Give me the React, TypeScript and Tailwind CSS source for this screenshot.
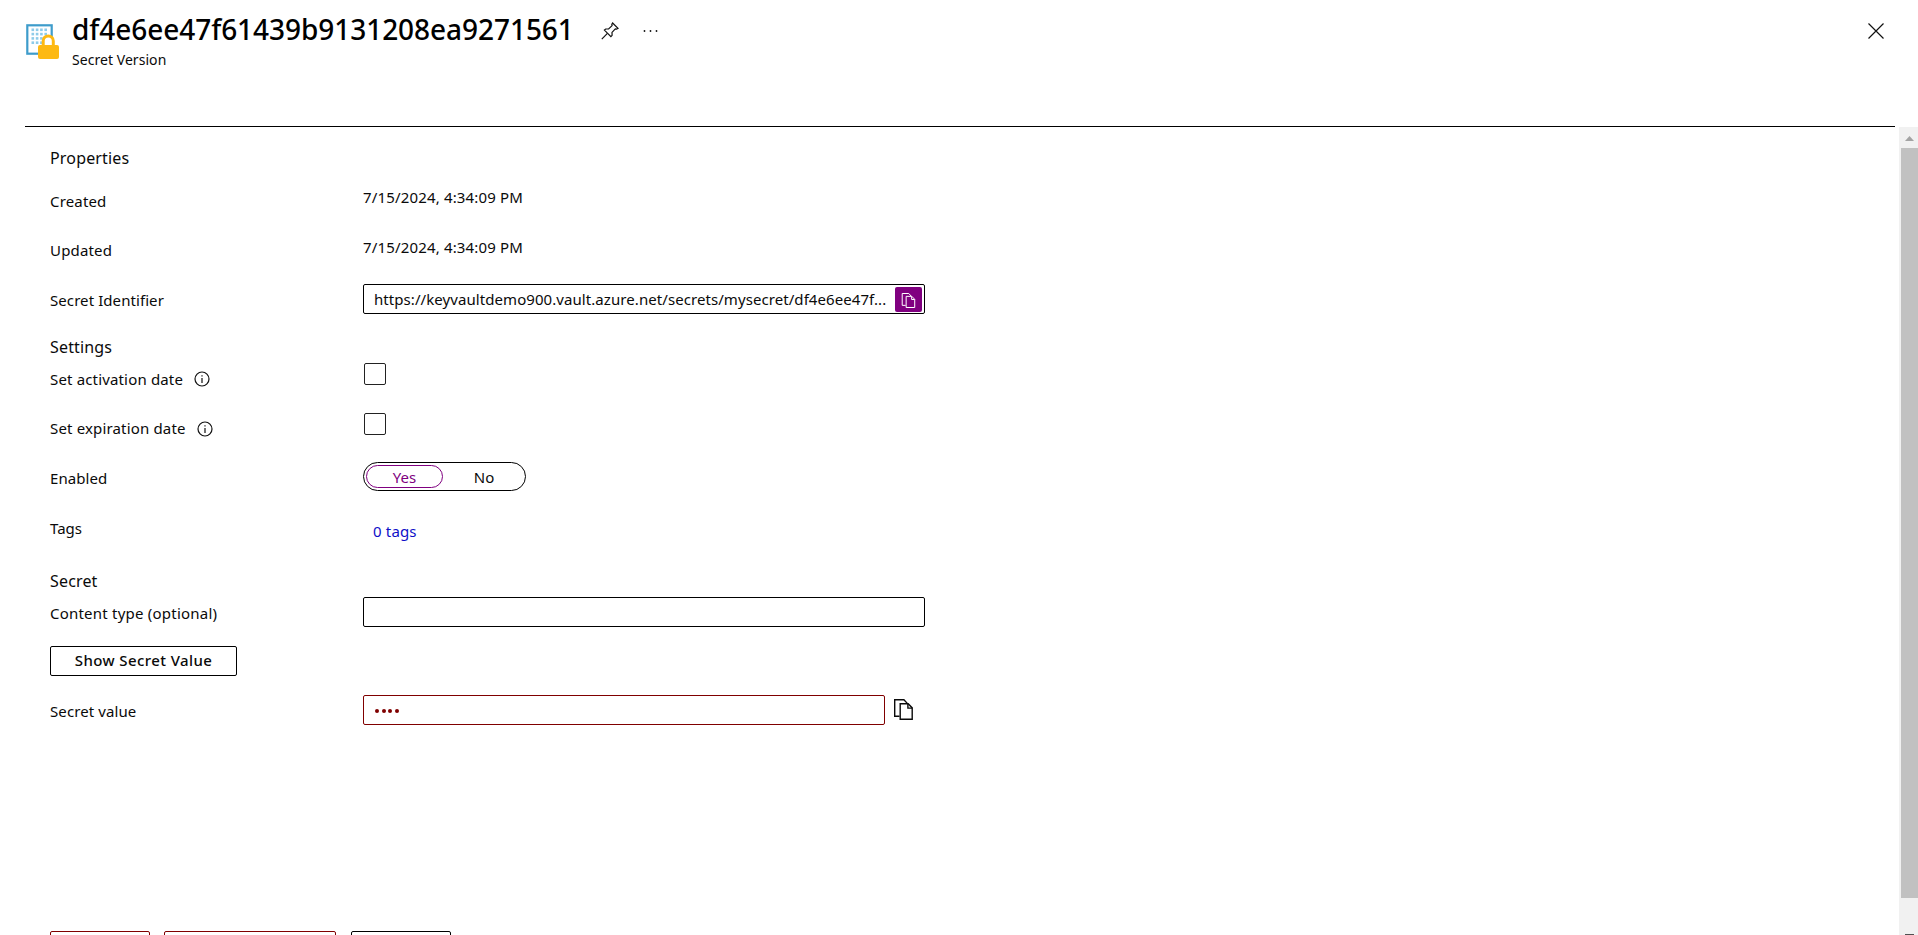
import type { ReactNode } from "react";

function SecretIcon() {
  return (
    <svg width="34" height="37" viewBox="0 0 34 37" className="mt-[23px] shrink-0">
      <rect x="2.3" y="2.3" width="24.4" height="28.4" fill="#fff" stroke="#3e9ccb" strokeWidth="2.2" />
      <g fill="#8ecbe9">
        {[5.5, 9.8, 14.1, 18.4].map((y) =>
          [6.5, 10.8, 15.1, 19.4].map((x) => <rect key={`${x}-${y}`} x={x} y={y} width="2.6" height="2.6" />)
        )}
      </g>
      <path d="M18.2 23v-5a5 5 0 0 1 10.1 0V23" fill="#fff" stroke="#fdb913" strokeWidth="3" />
      <rect x="13" y="22" width="21" height="14" rx="2" fill="#fdb913" />
    </svg>
  );
}

function PinIcon() {
  return (
    <svg width="18" height="18" viewBox="0 0 18 18" fill="none" stroke="#111" strokeWidth="1.2" strokeLinejoin="miter">
      <path d="M11.6 1 17 6.4 15.5 7.2 14.3 6.9 11 10.4 11.1 13.3 9.9 14.6 3.4 8.1 4.7 7 7.6 7 11.1 3.6 10.8 2.4Z" />
      <path d="M6.4 11.4 0.8 17.2" />
    </svg>
  );
}

function CopyIcon({ className, size }: { className: string; size: string }) {
  return (
    <svg width={size} height={size} viewBox="0 0 21 21" fill="none" stroke="currentColor" strokeWidth="1.4" className={className}>
      <path d="M6.5 17.3H1.7V.7h9.2l3.4 3.7" />
      <path d="M7.2 4.7h8l4 4.2v11.4h-12Z" />
      <path d="M14.9 4.9v4.2h4.2" />
    </svg>
  );
}

function InfoIcon() {
  return (
    <svg width="16" height="16" viewBox="0 0 16 16" fill="none" stroke="#111" className="mt-[2px]">
      <circle cx="8" cy="8" r="7" strokeWidth="1.2" />
      <path d="M8 7v5M8 4.2v1.4" strokeWidth="1.2" />
    </svg>
  );
}

function Row({ label, labelClass, valueClass, children }: { label: ReactNode; labelClass: string; valueClass: string; children?: ReactNode }) {
  return (
    <div className="flex h-[50px] shrink-0">
      <div className={`flex w-[313px] shrink-0 ${labelClass}`}>{label}</div>
      <div className={valueClass}>{children}</div>
    </div>
  );
}

export default function App() {
  return (
    <div className="flex h-[935px] w-[1918px] flex-col overflow-hidden bg-white font-['Noto_Sans',sans-serif] text-[15px] leading-[20px] tracking-[0.16px] text-[#0a0a0a]">
      <header className="flex h-[126px] shrink-0 pl-[25px]">
        <SecretIcon />
        <div className="ml-[13px] w-[529px]">
          <h1 className="mt-[9px] h-[41px] text-[28px] leading-[40px] font-medium tracking-[-0.05px] whitespace-nowrap text-black">
            df4e6ee47f61439b9131208ea9271561
          </h1>
          <p className="text-[14px] tracking-[0.05px]">Secret Version</p>
        </div>
        <div className="mt-[22px] flex h-[18px] items-center gap-[23px]">
          <PinIcon />
          <svg width="16" height="4" viewBox="0 0 16 4" fill="#111">
            <circle cx="2.5" cy="2" r="0.9" />
            <circle cx="8.5" cy="2" r="0.9" />
            <circle cx="14.5" cy="2" r="0.9" />
          </svg>
        </div>
        <svg width="16" height="16" viewBox="0 0 16 16" className="mt-[23px] mr-[34px] ml-auto" stroke="#111" strokeWidth="1.2">
          <path d="M.5.5l15 15M15.5.5l-15 15" />
        </svg>
      </header>
      <div className="mr-[23px] ml-[25px] h-px shrink-0 bg-black" />
      <div className="flex min-h-0 flex-1">
        <main className="flex flex-1 flex-col pl-[50px]">
          <h2 className="mt-[19px] mb-[13px] h-[24px] shrink-0 text-[16px] leading-[24px]">Properties</h2>
          <Row label="Created" labelClass="pt-[8px]" valueClass="pt-[4px]">7/15/2024, 4:34:09 PM</Row>
          <Row label="Updated" labelClass="pt-[7px]" valueClass="pt-[4px]">7/15/2024, 4:34:09 PM</Row>
          <Row label="Secret Identifier" labelClass="pt-[7px] tracking-[0.08px]" valueClass="pt-[1px]">
            <div className="flex h-[30px] w-[562px] items-center justify-between rounded-[2px] border border-black pr-[2px] pl-[10px]">
              <span className="tracking-[0.07px] whitespace-nowrap">https://keyvaultdemo900.vault.azure.net/secrets/mysecret/df4e6ee47f...</span>
              <button className="flex h-[25px] w-[27px] shrink-0 items-center justify-center rounded-[2px] bg-[#800080] text-white">
                <CopyIcon size="15" className="mt-[2px]" />
              </button>
            </div>
          </Row>
          <h2 className="mt-[2px] -mb-px h-[24px] shrink-0 text-[16px] leading-[24px]">Settings</h2>
          <Row label={<>Set activation date<span className="ml-[11px]"><InfoIcon /></span></>} labelClass="pt-[11px]" valueClass="pt-[5px]">
            <div className="ml-px h-[22px] w-[22px] rounded-[2px] border border-[#222]" />
          </Row>
          <Row label={<>Set expiration date<span className="mt-px ml-[11px]"><InfoIcon /></span></>} labelClass="pt-[10px]" valueClass="pt-[5px]">
            <div className="ml-px h-[22px] w-[22px] rounded-[2px] border border-[#222]" />
          </Row>
          <Row label="Enabled" labelClass="pt-[10px] tracking-[0.08px]" valueClass="pt-[4px]">
            <div className="flex h-[29px] w-[163px] items-center rounded-full border border-black pl-[2px]">
              <span className="flex h-[23px] w-[77px] items-center justify-center rounded-full border border-[#800080] tracking-normal text-[#800080]">Yes</span>
              <span className="flex w-[82px] justify-center tracking-normal">No</span>
            </div>
          </Row>
          <Row label="Tags" labelClass="pt-[10px] tracking-normal" valueClass="pt-[13px]">
            <span className="ml-[10px] text-[#0f0fc8]">0 tags</span>
          </Row>
          <h2 className="mt-[11px] -mb-px h-[24px] shrink-0 text-[16px] leading-[24px]">Secret</h2>
          <Row label="Content type (optional)" labelClass="pt-[11px] tracking-[0.22px]" valueClass="pt-[5px]">
            <div className="h-[30px] w-[562px] rounded-[2px] border border-black" />
          </Row>
          <div className="h-[50px] shrink-0 pt-[4px]">
            <button className="flex h-[30px] w-[187px] items-center justify-center rounded-[2px] border border-black pb-[2px] font-medium tracking-[0.4px]">Show Secret Value</button>
          </div>
          <Row label="Secret value" labelClass="pt-[9px] tracking-[0.1px]" valueClass="flex pt-[3px]">
            <div className="flex h-[30px] w-[522px] items-center gap-[2px] rounded-[2px] border border-[#800000] pl-[11px]">
              {[0, 1, 2, 3].map((i) => (
                <span key={i} className="mt-[2px] mr-[0.5px] h-[4px] w-[4px] rounded-full bg-[#800000]" />
              ))}
            </div>
            <CopyIcon size="21" className="mt-[4px] ml-[8px]" />
          </Row>
          <div className="mt-auto flex h-[4px] shrink-0 overflow-hidden">
            <div className="h-[30px] w-[100px] rounded-[2px] border border-[#800000]" />
            <div className="ml-[14px] h-[30px] w-[172px] rounded-[2px] border border-[#800000]" />
            <div className="ml-[15px] h-[30px] w-[100px] rounded-[2px] border border-black" />
          </div>
        </main>
        <div className="flex w-[19px] flex-col items-end bg-[#f1f1f1]">
          <svg width="17" height="21" viewBox="0 0 17 21" fill="#a3a3a3" className="shrink-0">
            <path d="M4 14 8.5 9 13 14Z" />
          </svg>
          <div className="h-[750px] w-[17px] bg-[#c1c1c1]" />
          <div className="mt-auto mr-[4px] h-px w-[9px] bg-[#505050]" />
        </div>
      </div>
    </div>
  );
}
